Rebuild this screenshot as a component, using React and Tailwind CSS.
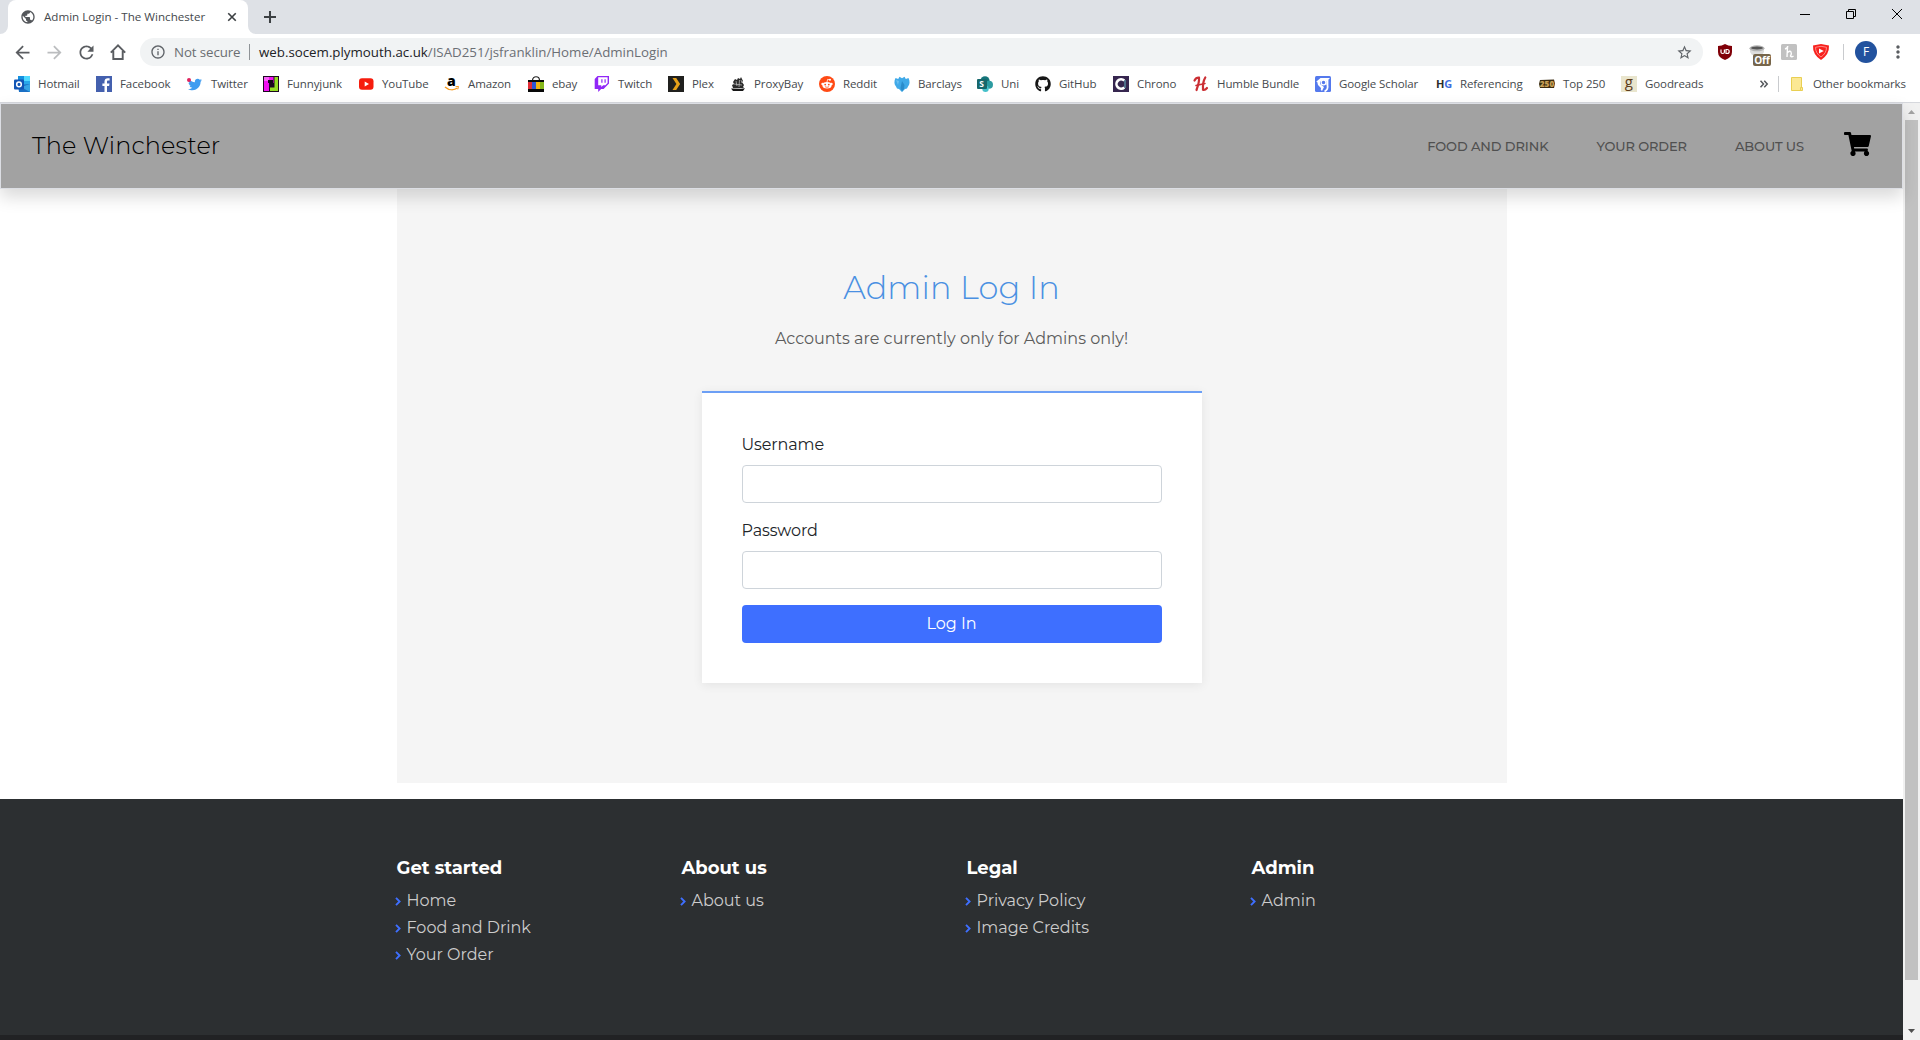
import React from 'react';
import { FaShoppingCart, FaTwitter, FaGithub } from 'react-icons/fa';
import { MdArrowBack, MdArrowForward, MdRefresh, MdInfoOutline, MdStarBorder, MdMoreVert, MdPublic } from 'react-icons/md';

const Svg = ({ children, className = 'h-4 w-4', ...rest }) => (
  <svg viewBox="0 0 16 16" className={`${className} shrink-0 overflow-visible`} {...rest}>{children}</svg>
);

const icons = {
  hotmail: (
    <Svg>
      <path d="M4 0h12v9H4z" fill="#1490df" /><path d="M10 0h6v5h-6z" fill="#50d9ff" /><path d="M10 5h6v4h-6z" fill="#28a8ea" />
      <path d="M4 9l12-1v8H5z" fill="#1a6fc4" /><path d="M16 8v8L7 11z" fill="#35a4e4" />
      <rect x="0" y="3.5" width="10" height="10" rx="1" fill="#1155b5" /><circle cx="5" cy="8.4" r="2.3" fill="none" stroke="#fff" strokeWidth="1.5" />
    </Svg>
  ),
  facebook: (
    <Svg>
      <path d="M0 0h16v16H0z" fill="#4460ae" />
      <path d="M11 16V9.9h2.1l.4-2.5H11V5.8c0-.8.3-1.2 1.3-1.2h1.3V2.3C13.3 2.2 12.6 2.2 11.9 2.2 9.8 2.2 8.5 3.4 8.5 5.6v1.8H6.4v2.5h2.1V16z" fill="#fff" />
    </Svg>
  ),
  twitter: (
    <span className="relative flex h-4 w-4 shrink-0 items-center justify-center">
      <FaTwitter className="h-[15px] w-[14px] text-[#3f9cf0]" />
      <span className="absolute left-0 top-0.5 h-[4px] w-[4px] rounded-full bg-[#e0245e]" />
    </span>
  ),
  funnyjunk: (
    <Svg>
      <path d="M0 0h16v16H0z" fill="#1c0820" /><path d="M1 1h9.500v6H6v8H1z" fill="#f010f0" /><path d="M1 1h5v4H1z" fill="#f860f8" />
      <path d="M11.500 1H15v14H7v-3.500h4.500z" fill="#94dc24" /><path d="M5 4h5v3H5z" fill="#14061a" />
    </Svg>
  ),
  youtube: (
    <Svg><rect x="1" y="2.3" width="14.500" height="11.4" rx="3" fill="#f61c0d" /><path d="M6.700 5.600v4.800L11 8z" fill="#fff" /></Svg>
  ),
  amazon: (
    <Svg>
      <text x="3" y="9.500" fontFamily="Open Sans" fontWeight="800" fontSize="14" fill="#000">a</text>
      <path d="M1 11c4 3.500 9 3.300 12.500 1" fill="none" stroke="#f79a1c" strokeWidth="1.400" /><path d="M11.500 10.700l3-.3-.7 3" fill="none" stroke="#f79a1c" />
    </Svg>
  ),
  ebay: (
    <Svg>
      <path d="M4.500 4.500C4.500-.5 11.500-.5 11.500 4.500" fill="none" stroke="#222" strokeWidth="1.200" />
      <path d="M0 4h16v12H0z" fill="#080808" /><path d="M0 6h4v7H0z" fill="#e02c35" /><path d="M4 6h4v7H4z" fill="#2e54d4" />
      <path d="M8 6h4v7H8z" fill="#f1b313" /><path d="M12 6h4v7h-4z" fill="#86b81b" />
    </Svg>
  ),
  twitch: (
    <Svg>
      <path d="M3.500 0L.7 2.900v10h3.500V16l2.900-3.100h2.500L15 7.600V0z" fill="#9127f7" /><path d="M4.200 1.300h9.400v5.700l-2.200 2.200H9.200l-1.900 1.900V9.200H4.200z" fill="#fff" />
      <path d="M7.300 3.300h1.200v3.500H7.300zM10.500 3.300h1.200v3.500h-1.200z" fill="#9127f7" />
    </Svg>
  ),
  plex: (
    <Svg><path d="M0 0h16v16H0z" fill="#20201e" /><path d="M4.500 2h3.700l3.900 6-3.900 6H4.500l3.900-6z" fill="#e6a119" /></Svg>
  ),
  proxybay: (
    <Svg>
      <path d="M1 12.500l2 2.500h10l2-2.700-4 .5z" fill="#161616" />
      <path d="M3 6l2-3 2 1 1-2 2 1 1-2 1 2 1 2-1 1 2 3-1 2 1 1H3l-1-3 2-1z" fill="#2b2b2b" /><path d="M6 5l1 5M9.500 4l-.5 7M4 8l8 1M11 4l1 3" stroke="#ddd" strokeWidth=".6" />
    </Svg>
  ),
  reddit: (
    <Svg>
      <circle cx="8" cy="8" r="8" fill="#ff4a14" /><ellipse cx="8" cy="9.200" rx="4.600" ry="3.300" fill="#fff" />
      <circle cx="3.500" cy="7.900" r="1.200" fill="#fff" /><circle cx="12.500" cy="7.900" r="1.200" fill="#fff" /><circle cx="11" cy="3.800" r="1" fill="#fff" />
      <path d="M8 6l.6-2.600 2.400.5" fill="none" stroke="#fff" strokeWidth=".8" /><circle cx="6.200" cy="8.600" r=".9" fill="#ff4a14" /><circle cx="9.800" cy="8.600" r=".9" fill="#ff4a14" />
      <path d="M6 10.700q2 1.300 4 0" fill="none" stroke="#ff4a14" strokeWidth=".7" />
    </Svg>
  ),
  barclays: (
    <Svg>
      <path d="M1.500 2l2.700 1L5.500.8 8 2.200 10.500.8l1.300 2.200 2.700-1C16 5 16 8.500 14 10.500l-1 2-2 .5-3 3-3-3-2-.5-1-2C0 8.500 0 5 1.500 2z" fill="#3fa9e8" />
      <path d="M8 5l2.500 4-.5 4-2 2.500L6.500 12z" fill="#2a8ccb" /><path d="M2 4l3 1-1 4z" fill="#6cc0f0" />
    </Svg>
  ),
  uni: (
    <Svg>
      <circle cx="8" cy="4.800" r="4.600" fill="#13757a" /><circle cx="12" cy="8.700" r="4" fill="#2c9ba1" /><circle cx="8.500" cy="12.700" r="3.200" fill="#45c0ca" />
      <rect x="0" y="3" width="10" height="10" rx="1" fill="#17686c" />
      <text x="2.300" y="11.200" fontFamily="Open Sans" fontWeight="700" fontSize="8.500" fill="#fff">S</text>
    </Svg>
  ),
  github: <FaGithub className="h-4 w-4 shrink-0 text-[#161616]" />,
  chrono: (
    <Svg>
      <path d="M0 0h16v16H0z" fill="#36264f" /><path d="M11.300 4.500A4.700 4.700 0 1 0 11.300 11.500" fill="none" stroke="#fff" strokeWidth="2.600" />
      <path d="M12 4.500v7" stroke="#67b4c4" strokeWidth="2" strokeDasharray="1 1" />
    </Svg>
  ),
  humble: (
    <Svg fill="none" stroke="#cb2f34" strokeLinecap="round">
      <path d="M1.500 4.500Q3 1.500 6 1.700Q6.500 6 3.500 14" strokeWidth="2.200" /><path d="M12.300 1.500Q9.500 6 10 13.800Q12 14.500 14 12" strokeWidth="2.200" /><path d="M3 9.500l9-2" strokeWidth="1.500" />
    </Svg>
  ),
  scholar: (
    <Svg>
      <rect width="16" height="16" rx="1.500" fill="#5479ed" /><path d="M1 6l4.500-4H15l-2.500 2.500V9h-1V5z" fill="#fff" />
      <path d="M2 5l3-1v4l4 3-2 4q-2-1-1-3L3 9z" fill="#fff" /><circle cx="8.500" cy="6.500" r="2.400" fill="#5479ed" stroke="#fff" strokeWidth="1.300" />
      <path d="M12.500 3.500v6q1 4-3 6" fill="none" stroke="#fff" strokeWidth="1.800" />
    </Svg>
  ),
  referencing: (
    <span className="flex w-4 shrink-0 justify-center font-['Open_Sans'] text-[11px] font-bold leading-4 text-[#2c2c2c]">H<span className="text-[#3e6ddd]">G</span></span>
  ),
  top250: (
    <Svg>
      <path d="M1 4l14-.5 1 4-1 4.500H1L0 8z" fill="#3a2a10" />
      <text x=".7" y="10.900" fontFamily="Open Sans" fontWeight="800" fontSize="8.200" fill="#c9a055" textLength="14.500">250</text>
    </Svg>
  ),
  goodreads: (
    <Svg>
      <path d="M0 0h16v16H0z" fill="#e9e5cd" /><text x="3.800" y="11" fontFamily="Open Sans" fontSize="15" fill="#5d3c1a">g</text>
    </Svg>
  ),
};

const bookmarks = [
  ['Hotmail', 'hotmail', 'w-[82px]'], ['Facebook', 'facebook', 'w-[91px]'], ['Twitter', 'twitter', 'w-[76px]'],
  ['Funnyjunk', 'funnyjunk', 'w-[95px]'], ['YouTube', 'youtube', 'w-[86px]'], ['Amazon', 'amazon', 'w-[84px]'],
  ['ebay', 'ebay', 'w-[66px]'], ['Twitch', 'twitch', 'w-[74px]'], ['Plex', 'plex', 'w-[62px]'],
  ['ProxyBay', 'proxybay', 'w-[89px]'], ['Reddit', 'reddit', 'w-[75px]'], ['Barclays', 'barclays', 'w-[83px]'],
  ['Uni', 'uni', 'w-[58px]'], ['GitHub', 'github', 'w-[78px]'], ['Chrono', 'chrono', 'w-[80px]'],
  ['Humble Bundle', 'humble', 'w-[122px]'], ['Google Scholar', 'scholar', 'w-[121px]'], ['Referencing', 'referencing', 'w-[103px]'],
  ['Top 250', 'top250', 'w-[82px]'], ['Goodreads', 'goodreads', 'w-[100px]'],
];

const ToolButton = ({ children }) => <div className="flex w-8 shrink-0 items-center justify-center text-[#5a5d61]">{children}</div>;

function TabStrip() {
  return (
    <div className="flex h-[34px] items-stretch bg-[#dee1e6]">
      <div className="flex w-2 items-end">
        <svg viewBox="0 0 8 8" className="h-2 w-2"><path d="M8 0v8H0a8 8 0 0 0 8-8z" fill="#fff" /></svg>
      </div>
      <div className="flex w-60 items-center rounded-t-lg bg-white pl-[12px] pr-[11px]">
        <MdPublic className="h-4 w-4 text-[#54575b]" />
        <span className="ml-2 flex-1 whitespace-nowrap text-[11.6px] text-[#45494d]">Admin Login - The Winchester</span>
        <Svg className="h-2.5 w-2.5" stroke="#3c4043" strokeWidth="2.600"><path d="M2 2l12 12M14 2L2 14" /></Svg>
      </div>
      <div className="flex w-2 items-end">
        <svg viewBox="0 0 8 8" className="h-2 w-2"><path d="M0 0v8h8a8 8 0 0 1-8-8z" fill="#fff" /></svg>
      </div>
      <div className="ml-2 flex items-center">
        <Svg className="h-3 w-3" stroke="#3c4043" strokeWidth="2.700"><path d="M8 0v16M0 8h16" /></Svg>
      </div>
      <div className="ml-auto flex pt-[9px] text-black">
        <svg viewBox="0 0 10 10" className="mr-9 h-2.5 w-2.5"><path d="M0 5.500h10" stroke="currentColor" /></svg>
        <svg viewBox="0 0 10 10" className="mr-9 h-2.5 w-2.5" fill="none" stroke="currentColor"><path d="M.5 2.500h7v7h-7zM2.500 2.500v-2h7v7h-2" /></svg>
        <svg viewBox="0 0 10 10" className="mr-[18px] h-2.5 w-2.5" stroke="currentColor"><path d="M0 0l10 10M10 0L0 10" /></svg>
      </div>
    </div>
  );
}

function Toolbar() {
  return (
    <div className="flex h-9 items-center pl-1.5">
      <ToolButton><MdArrowBack className="h-[21px] w-[21px]" /></ToolButton>
      <ToolButton><MdArrowForward className="h-[21px] w-[21px] text-[#bbbdbf]" /></ToolButton>
      <ToolButton><MdRefresh className="h-[21px] w-[21px]" /></ToolButton>
      <ToolButton><Svg fill="none" stroke="currentColor" strokeWidth="1.900"><path d="M.8 8.600L8 1.400l7.200 7.200M3.300 7v8h9.400V7" /></Svg></ToolButton>
      <div className="ml-1.5 flex h-7 w-[1563px] items-center rounded-full bg-[#f1f3f4] pl-2.5 text-[13.300px]">
        <MdInfoOutline className="h-4 w-4 text-[#5f6368]" />
        <span className="ml-2 mt-px w-[67px] whitespace-nowrap tracking-[-0.1px] text-[#6a6e72]">Not secure</span>
        <span className="ml-2 h-4 w-px bg-[#8f9397]" />
        <span className="ml-[9px] mt-px text-[#6b6f74]"><span className="text-[#202124]">web.socem.plymouth.ac.uk</span>/ISAD251/jsfranklin/Home/AdminLogin</span>
        <MdStarBorder className="ml-auto mr-2.5 h-[17px] w-[17px] text-[#5f6368]" />
      </div>
      <div className="w-1.5" />
      <ToolButton>
        <Svg><path d="M8 0q3 2 7 2v6q0 5.500-7 8Q1 13.500 1 8V2q4 0 7-2z" fill="#800008" /><path d="M4 5.500v2.800q0 1.200 1.700 1.200T7.400 8.300V5.500M9 5.500h1.200a2 2 0 0 1 0 4H9z" fill="none" stroke="#fff" strokeWidth="1.200" /></Svg>
      </ToolButton>
      <ToolButton>
        <span className="relative h-4 w-4">
          <Svg><path d="M1 5v3l2 3h10l2-3V5z" fill="#dedede" /><ellipse cx="8" cy="4.300" rx="7.500" ry="3" fill="#b4b4b4" /><ellipse cx="8" cy="4" rx="6" ry="1.500" fill="#555" /></Svg>
          <span className="absolute left-1 top-2.5 h-3 w-[18px] rounded-[2px] bg-[#76654a] text-center text-[10px] font-bold leading-3 text-white">Off</span>
        </span>
      </ToolButton>
      <ToolButton>
        <Svg><rect width="16" height="16" rx="1.500" fill="#c1c1c1" /><path d="M4 5q3-1 2.700-3M6.500 3L6 13M6 9q3-3 4-1t-.5 4q1 1.500 3 0" fill="none" stroke="#fff" strokeWidth="1.400" /></Svg>
      </ToolButton>
      <ToolButton>
        <Svg><path d="M8 0l8 1.500q.5 9-8 14.500Q-.5 10.500 0 1.500z" fill="#f8211d" /><path d="M8 2.300l5.500 1q0 6-5.500 9.700Q2.500 9.300 2.500 3.300z" fill="none" stroke="#ff8985" /><path d="M6 4.500v5L10.800 7z" fill="#fff" /></Svg>
      </ToolButton>
      <span className="ml-1.5 mr-1.5 h-4 w-px bg-[#c9cbce]" />
      <ToolButton><span className="flex h-[22px] w-[22px] items-center justify-center rounded-full bg-[#22529e] text-[12px] text-white">F</span></ToolButton>
      <ToolButton><MdMoreVert className="h-5 w-5" /></ToolButton>
    </div>
  );
}

function BookmarksBar() {
  return (
    <div className="flex h-[33px] items-center whitespace-nowrap border-b border-[#d6d8dd] pb-1 pl-3.5 text-[11.500px] tracking-[-0.1px] text-[#45494d]">
      {bookmarks.map(([label, icon, width]) => (
        <div key={label} className={`flex shrink-0 items-center gap-2 ${width}`}>{icons[icon]}{label}</div>
      ))}
      <div className="ml-auto flex items-center pr-[15px]">
        <Svg className="h-2 w-2" fill="none" stroke="#55585c" strokeWidth="3"><path d="M1 1.500L7 8l-6 6.500M8.500 1.500l6 6.500-6 6.500" /></Svg>
        <span className="ml-2.5 h-4 w-px bg-[#c9cbce]" />
        <svg viewBox="0 0 13 14" className="ml-3 h-3.5 w-[13px]"><path d="M.5.5h10v13H.5z" fill="#fbe894" stroke="#e9cf52" /><path d="M9.500 10.500h2v3h-2z" fill="#fbe894" stroke="#e9cf52" /></svg>
        <span className="ml-[9px] w-[92px]">Other bookmarks</span>
      </div>
    </div>
  );
}

const Field = ({ label }) => (
  <label className="mb-4 block">
    <span className="mb-2 block leading-6 tracking-[-0.1px]">{label}</span>
    <input className="block h-[38px] w-full rounded border border-[#ced4da] bg-white" />
  </label>
);

const columns = [
  ['Get started', ['Home', 'Food and Drink', 'Your Order']],
  ['About us', ['About us']],
  ['Legal', ['Privacy Policy', 'Image Credits']],
  ['Admin', ['Admin']],
];

function Page() {
  return (
    <div className="flex w-[1903px] flex-col bg-white font-[Montserrat,Inter,sans-serif] text-base text-[#212529]">
      <header className="z-10 flex h-[86px] shrink-0 items-center border border-[#dcdee4] bg-[#a2a2a2] px-[31px] shadow-[0_8px_16px_rgba(0,0,0,0.15)]">
        <span className="text-2xl font-light tracking-[0.15px] text-black">The Winchester</span>
        <nav className="ml-auto mt-0.5 flex items-center gap-12 text-[13px] font-medium tracking-[-0.1px] text-[#505050]">
          <a>FOOD AND DRINK</a><a>YOUR ORDER</a><a>ABOUT US</a>
        </nav>
        <FaShoppingCart className="-mt-1 ml-10 h-6 w-[27px] text-black" />
      </header>
      <main className="mx-auto flex h-[594px] w-[1110px] shrink-0 flex-col items-center bg-[#f5f5f5] pt-20">
        <h1 className="text-[32px] font-light leading-[38px] tracking-[0.1px] text-[#4a90e2]">Admin Log In</h1>
        <p className="mt-5 leading-6 text-[#5c5c5c]">Accounts are currently only for Admins only!</p>
        <form className="mt-10 w-[500px] border-t-2 border-[#6c9ff5] bg-white p-10 shadow-[0_2px_10px_rgba(0,0,0,0.075)]">
          <Field label="Username" />
          <Field label="Password" />
          <button type="button" className="block h-[38px] w-full rounded bg-[#3e6fff] text-white">Log In</button>
        </form>
      </main>
      <footer className="mt-4 flex flex-1 flex-col bg-[#2c2f31]">
        <div className="flex flex-1 pl-[396.5px] pt-14">
          {columns.map(([title, links]) => (
            <div key={title} className="w-[285px]">
              <h2 className="mb-[5px] text-lg font-bold leading-[27px] text-white">{title}</h2>
              {links.map((link) => (
                <a key={link} className="flex items-center leading-[27px] text-[#cccccc]">
                  <svg viewBox="0 0 6 9" className="-ml-0.5 mr-1.5 mt-0.5 h-[9px] w-1.5" fill="none" stroke="#3e6fff" strokeWidth="1.900"><path d="M1 .8l3.600 3.700L1 8.200" /></svg>
                  {link}
                </a>
              ))}
            </div>
          ))}
        </div>
        <div className="h-[5px] bg-[#212224]" />
      </footer>
    </div>
  );
}

export default function App() {
  return (
    <div className="flex h-[1040px] w-[1920px] flex-col overflow-hidden bg-white font-['Open_Sans',sans-serif]">
      <TabStrip />
      <Toolbar />
      <BookmarksBar />
      <div className="flex min-h-0 flex-1">
        <Page />
        <div className="flex w-[17px] flex-col items-center bg-[#f1f1f1]">
          <svg viewBox="0 0 7 4" className="mt-[7px] h-1 w-[7px] shrink-0"><path d="M0 4l3.500-4L7 4z" fill="#a3a3a3" /></svg>
          <div className="mt-1.5 h-[860px] w-[13px] shrink-0 bg-[#c1c1c1]" />
          <svg viewBox="0 0 7 4" className="mb-[7px] mt-auto h-1 w-[7px] shrink-0"><path d="M0 0l3.500 4L7 0z" fill="#505050" /></svg>
        </div>
      </div>
    </div>
  );
}
